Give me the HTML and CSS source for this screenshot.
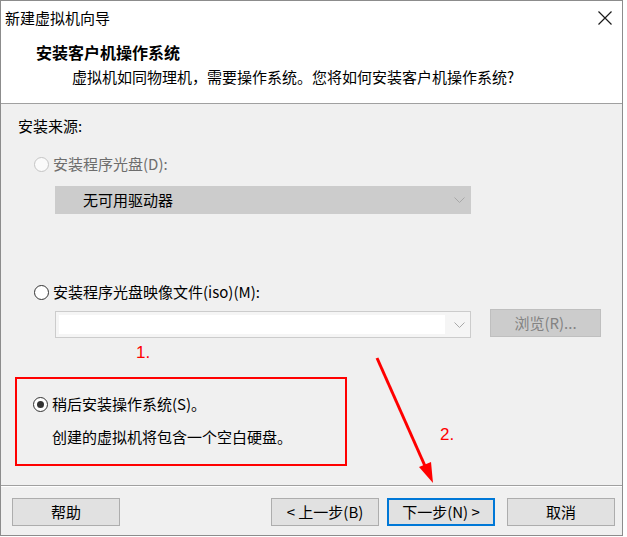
FILE: index.html
```html
<!DOCTYPE html>
<html lang="zh-CN">
<head>
  <meta charset="UTF-8">
  <title>新建虚拟机向导</title>
  <link rel="stylesheet" href="styles.css">
</head>
<body>
  <div id="wizard">
    <div id="title-bar">
      <span>新建虚拟机向导</span>
      <svg class="close" width="14" height="14" viewBox="0 0 14 14">
        <path d="M0.5 0.5 L13.5 13.5 M13.5 0.5 L0.5 13.5" stroke="#1a1a1a" stroke-width="1.2" fill="none"/>
      </svg>
    </div>
    <div id="header">
      <div class="head-title">安装客户机操作系统</div>
      <div class="head-sub">虚拟机如同物理机，需要操作系统。您将如何安装客户机操作系统?</div>
    </div>
    <div id="content">
      <div class="source-label">安装来源:</div>

      <div class="option disabled first">
        <span class="radio"></span>
        <span>安装程序光盘(D):</span>
      </div>
      <div class="select disabled-select">
        <span>无可用驱动器</span>
        <svg class="chevron" width="11" height="6" viewBox="0 0 11 6">
          <path d="M0.5 0.5 L5.5 5.5 L10.5 0.5" stroke="#a8a8a8" fill="none"/>
        </svg>
      </div>

      <div class="option second">
        <span class="radio"></span>
        <span>安装程序光盘映像文件(iso)(M):</span>
      </div>
      <div class="iso-row">
        <div class="select combo">
          <div class="combo-field"></div>
          <svg class="chevron" width="11" height="6" viewBox="0 0 11 6">
            <path d="M0.5 0.5 L5.5 5.5 L10.5 0.5" stroke="#a8a8a8" fill="none"/>
          </svg>
        </div>
        <div class="browse">浏览(R)...</div>
      </div>

      <div class="later-box">
        <div class="option">
          <span class="radio checked"></span>
          <span>稍后安装操作系统(S)。</span>
        </div>
        <div class="later-desc">创建的虚拟机将包含一个空白硬盘。</div>
      </div>
    </div>
    <div id="footer">
      <div class="btn">帮助</div>
      <div class="spacer"></div>
      <div class="btn">&lt; 上一步(B)</div>
      <div class="btn primary">下一步(N) &gt;</div>
      <div class="btn cancel">取消</div>
    </div>

    <!-- red annotations drawn on top of the dialog -->
    <span class="note note-1">1.</span>
    <span class="note note-2">2.</span>
    <svg class="arrow" width="623" height="536" viewBox="0 0 623 536">
      <line x1="377" y1="358" x2="425" y2="466" stroke="#ff0000" stroke-width="3"/>
      <polygon points="433,483 419,467 431,462" fill="#ff0000"/>
    </svg>
  </div>
</body>
</html>
```

FILE: styles.css
```css
body {
  margin: 0;
  background: #ffffff;
  font-family: "Noto Sans CJK SC", "Noto Sans", sans-serif;
  font-size: 15px;
  line-height: 20px;
  color: #000000;
}
#wizard {
  position: relative;
  width: 621px;
  height: 534px;
  border: 1px solid #8c8c8c;
  background: #f0f0f0;
  display: flex;
  flex-direction: column;
}
#title-bar {
  height: 33px;
  background: #ffffff;
  display: flex;
  align-items: center;
  padding-left: 4px;
}
#title-bar span {
  flex: 1;
}
#title-bar .close {
  margin-right: 10px;
}
#header {
  height: 61px;
  background: #ffffff;
  border-bottom: 1px solid #a0a0a0;
  padding-top: 8px;
}
.head-title {
  font-size: 16px;
  font-weight: bold;
  padding-left: 35px;
}
.head-sub {
  margin-top: 5px;
  padding-left: 71px;
}
#content {
  height: 381px;
  padding-left: 17px;
}
.source-label {
  margin-top: 12px;
}
.option {
  display: flex;
  align-items: center;
  gap: 4px;
  padding-left: 16px;
}
.option.first {
  margin-top: 18px;
}
.option.second {
  margin-top: 68px;
}
.option.disabled {
  color: #6d6d6d;
}
.radio {
  width: 13px;
  height: 13px;
  border: 1px solid #333333;
  border-radius: 50%;
  background: #ffffff;
  position: relative;
}
.disabled .radio {
  border-color: #c4c4c4;
  background: #fafafa;
}
.radio.checked::after {
  content: "";
  position: absolute;
  left: 3px;
  top: 3px;
  width: 7px;
  height: 7px;
  border-radius: 50%;
  background: #333333;
}
.select {
  box-sizing: border-box;
  width: 416px;
  height: 28px;
  margin-left: 37px;
  display: flex;
  align-items: center;
}
.disabled-select {
  margin-top: 12px;
  background: #cccccc;
  border: 1px solid #cccccc;
  padding-left: 27px;
}
.disabled-select span {
  flex: 1;
}
.chevron {
  margin-right: 5px;
}
.iso-row {
  display: flex;
  align-items: flex-start;
  margin-top: 7px;
}
.combo {
  margin-top: 2px;
  height: 27px;
  border: 1px solid #cccccc;
  background: #f5f5f5;
  padding: 3px 0 3px 3px;
}
.combo-field {
  flex: 1;
  align-self: stretch;
  background: #ffffff;
  margin-right: 9px;
}
.browse {
  box-sizing: border-box;
  width: 111px;
  height: 28px;
  margin-left: 19px;
  background: #cccccc;
  border: 1px solid #bfbfbf;
  color: #838383;
  display: flex;
  align-items: center;
  justify-content: center;
}
.later-box {
  box-sizing: border-box;
  width: 332px;
  height: 89px;
  margin-top: 39px;
  margin-left: -3px;
  border: 2px solid #ff0000;
  padding-top: 15px;
}
.later-box .option {
  padding-left: 16px;
}
.later-desc {
  margin-top: 13px;
  padding-left: 35px;
}
#footer {
  flex: 1;
  border-top: 1px solid #a0a0a0;
  box-shadow: inset 0 1px 0 #ffffff;
  display: flex;
  align-items: flex-start;
  gap: 8px;
  padding: 12px 7px 0 11px;
}
.spacer {
  flex: 1;
}
.btn {
  box-sizing: border-box;
  width: 108px;
  height: 28px;
  background: #e1e1e1;
  border: 1px solid #adadad;
  display: flex;
  align-items: center;
  justify-content: center;
}
.btn.primary {
  border: 2px solid #0078d7;
}
.btn.cancel {
  margin-left: 4px;
}
.note {
  position: absolute;
  color: #ff0000;
  font-family: "Liberation Sans", sans-serif;
  font-size: 17px;
  line-height: 20px;
}
.note-1 {
  left: 135px;
  top: 342px;
}
.note-2 {
  left: 439px;
  top: 424px;
}
.arrow {
  position: absolute;
  left: -1px;
  top: -1px;
  pointer-events: none;
}
```
